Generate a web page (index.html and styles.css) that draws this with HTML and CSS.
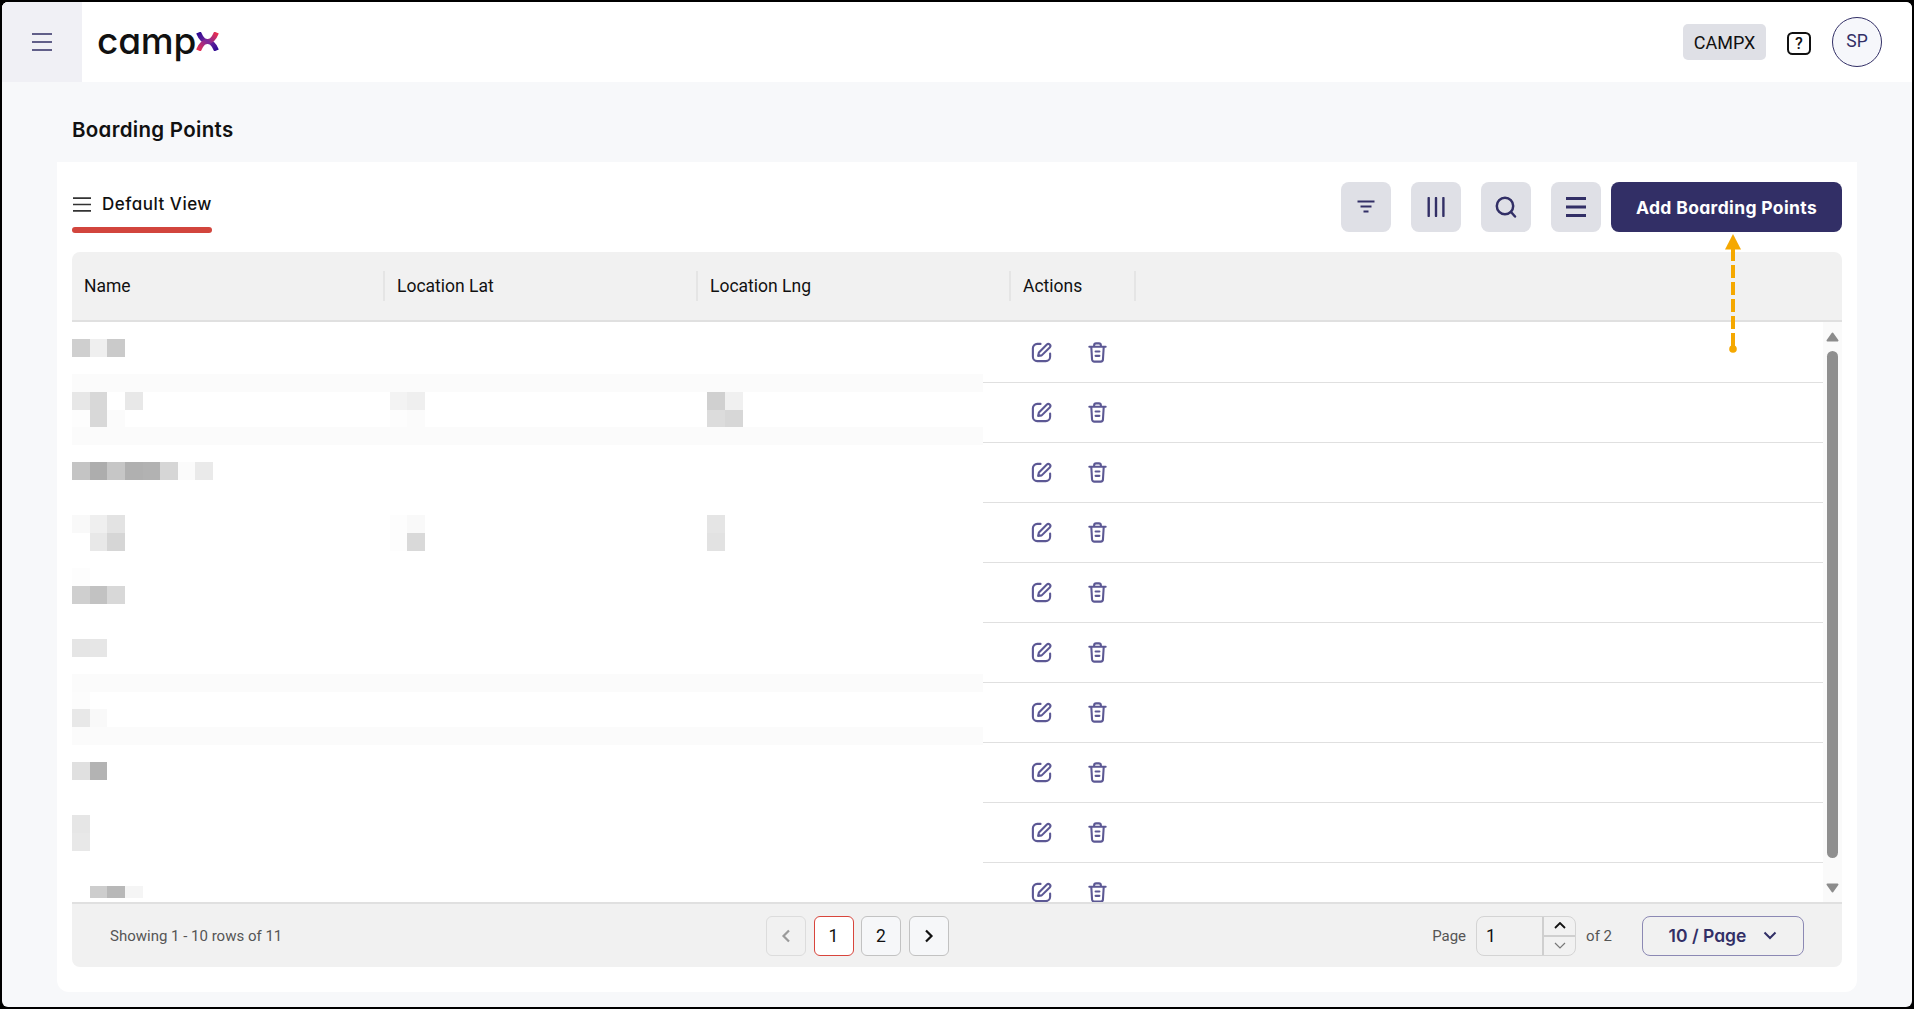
FILE: index.html
```html
<!DOCTYPE html>
<html lang="en">
<head>
<meta charset="utf-8">
<title>Boarding Points</title>
<link rel="stylesheet" href="styles.css">
</head>
<body>
<div class="app">
  <header class="topbar">
    <button class="menu-btn" aria-label="Menu">
      <svg width="20" height="18" viewBox="0 0 20 18"><path d="M0 1h20M0 9h20M0 17h20" stroke="#322f66" stroke-width="1.5"/></svg>
    </button>
    <div class="logo">
      <span class="logo-text">camp</span>
      <svg class="logo-x" width="23" height="19" viewBox="0 0 23 19">
        <defs>
          <linearGradient id="lgA" x1="0" y1="1" x2="1" y2="0"><stop offset="0" stop-color="#ee2f4d"/><stop offset=".5" stop-color="#7c2a9c"/><stop offset="1" stop-color="#ee2f4d"/></linearGradient>
          <linearGradient id="lgB" x1="0" y1="0" x2="1" y2="1"><stop offset="0" stop-color="#2c0a93"/><stop offset=".5" stop-color="#7c2a9c"/><stop offset="1" stop-color="#2c0a93"/></linearGradient>
        </defs>
        <path d="M2.5 .5C6 9 9 9.5 11.5 9.5S17 10 20.5 18.5" fill="none" stroke="url(#lgB)" stroke-width="5"/>
        <path d="M2.5 18.5C6 10 9 9.5 11.5 9.5S17 9 20.5 .5" fill="none" stroke="url(#lgA)" stroke-width="5"/>
      </svg>
    </div>
    <div class="top-right">
      <span class="chip">CAMPX</span>
      <svg class="help" width="24" height="23" viewBox="0 0 24 23"><rect x="1" y="1" width="22" height="21" rx="4.5" fill="none" stroke="#111" stroke-width="2"/><text x="12" y="17" text-anchor="middle" class="help-q">?</text></svg>
      <span class="avatar">SP</span>
    </div>
  </header>

  <main class="content">
    <h1 class="page-title">Boarding Points</h1>
    <section class="card">
      <div class="toolbar">
        <div class="tab">
          <div class="tab-label">
            <svg width="18" height="15" viewBox="0 0 18 15"><path d="M0 1.2h18M0 7.5h18M0 13.8h18" stroke="#333" stroke-width="1.7"/></svg>
            <span>Default View</span>
          </div>
          <div class="tab-line"></div>
        </div>
        <div class="tools">
          <button class="tool" aria-label="Filter"><svg width="18" height="14" viewBox="0 0 18 14"><path d="M.5 1.5h17M3.5 6.5h11M6.5 11.5h5" stroke="#322f66" stroke-width="2.2"/></svg></button>
          <button class="tool" aria-label="Columns"><svg width="18" height="20" viewBox="0 0 18 20"><path d="M1.7 1v18M9 1v18M16.4 1v18" stroke="#322f66" stroke-width="2.4" stroke-linecap="round"/></svg></button>
          <button class="tool" aria-label="Search"><svg width="22" height="22" viewBox="0 0 22 22"><circle cx="10" cy="10" r="8.2" fill="none" stroke="#322f66" stroke-width="2.5"/><path d="M16 16l4 4.5" stroke="#322f66" stroke-width="2.5" stroke-linecap="round"/></svg></button>
          <button class="tool" aria-label="Density"><svg width="20" height="20" viewBox="0 0 20 20"><path d="M0 1.5h20M0 10h20M0 18.5h20" stroke="#322f66" stroke-width="3"/></svg></button>
          <button class="add-btn">Add Boarding Points</button>
        </div>
      </div>

      <div class="table">
        <div class="thead">
          <div class="th">Name</div>
          <div class="th">Location Lat</div>
          <div class="th">Location Lng</div>
          <div class="th th-actions">Actions</div>
        </div>
        <div class="tbody">
          <div class="rows">
            <div class="row"><svg class="ic"><use href="#i-edit"/></svg><svg class="ic"><use href="#i-trash"/></svg></div>
            <div class="row"><svg class="ic"><use href="#i-edit"/></svg><svg class="ic"><use href="#i-trash"/></svg></div>
            <div class="row"><svg class="ic"><use href="#i-edit"/></svg><svg class="ic"><use href="#i-trash"/></svg></div>
            <div class="row"><svg class="ic"><use href="#i-edit"/></svg><svg class="ic"><use href="#i-trash"/></svg></div>
            <div class="row"><svg class="ic"><use href="#i-edit"/></svg><svg class="ic"><use href="#i-trash"/></svg></div>
            <div class="row"><svg class="ic"><use href="#i-edit"/></svg><svg class="ic"><use href="#i-trash"/></svg></div>
            <div class="row"><svg class="ic"><use href="#i-edit"/></svg><svg class="ic"><use href="#i-trash"/></svg></div>
            <div class="row"><svg class="ic"><use href="#i-edit"/></svg><svg class="ic"><use href="#i-trash"/></svg></div>
            <div class="row"><svg class="ic"><use href="#i-edit"/></svg><svg class="ic"><use href="#i-trash"/></svg></div>
            <div class="row"><svg class="ic"><use href="#i-edit"/></svg><svg class="ic"><use href="#i-trash"/></svg></div>
          </div>
          <div class="scrollbar">
            <svg class="sb-arrow" width="13" height="10" viewBox="0 0 13 10"><path d="M6.5 1.5L11.5 8.5H1.5Z" fill="#8c8c8c" stroke="#8c8c8c" stroke-width="2" stroke-linejoin="round"/></svg>
            <div class="sb-thumb"></div>
            <svg class="sb-arrow" width="13" height="10" viewBox="0 0 13 10"><path d="M6.5 8.5L11.5 1.5H1.5Z" fill="#8c8c8c" stroke="#8c8c8c" stroke-width="2" stroke-linejoin="round"/></svg>
          </div>
          <div class="mosaic" aria-hidden="true">
            <div class="m-row"><div class="m-col"><i class="g-cf"></i><i class="g-ef"></i><i class="g-ca"></i></div></div>
            <div class="m-row"></div>
            <div class="m-row band"></div>
            <div class="m-row"><div class="m-col"><i class="g-e7"></i><i class="g-d8"></i><i class="g-ff"></i><i class="g-e8"></i></div><div class="m-col"><i class="g-f3"></i><i class="g-ef"></i></div><div class="m-col"><i class="g-d0"></i><i class="g-f0"></i></div></div>
            <div class="m-row"><div class="m-col"><i class="g-fd"></i><i class="g-d8"></i><i class="g-fb"></i></div><div class="m-col"><i class="g-fd"></i><i class="g-fb"></i></div><div class="m-col"><i class="g-dc"></i><i class="g-d7"></i></div></div>
            <div class="m-row band"></div>
            <div class="m-row"></div>
            <div class="m-row"><div class="m-col"><i class="g-c4"></i><i class="g-ad"></i><i class="g-c6"></i><i class="g-b0"></i><i class="g-b2"></i><i class="g-d6"></i><i class="g-fb"></i><i class="g-ea"></i></div></div>
            <div class="m-row"></div>
            <div class="m-row"></div>
            <div class="m-row"><div class="m-col"><i class="g-f9"></i><i class="g-ef"></i><i class="g-e3"></i></div><div class="m-col"><i class="g-fd"></i><i class="g-f9"></i></div><div class="m-col"><i class="g-e5"></i></div></div>
            <div class="m-row"><div class="m-col"><i class="g-ff"></i><i class="g-e8"></i><i class="g-d6"></i></div><div class="m-col"><i class="g-fd"></i><i class="g-d9"></i></div><div class="m-col"><i class="g-e2"></i></div></div>
            <div class="m-row"></div>
            <div class="m-row"><div class="m-col"><i class="g-fd"></i></div></div>
            <div class="m-row"><div class="m-col"><i class="g-cf"></i><i class="g-c2"></i><i class="g-d8"></i></div></div>
            <div class="m-row"></div>
            <div class="m-row"></div>
            <div class="m-row"><div class="m-col"><i class="g-e5"></i><i class="g-e6"></i></div></div>
            <div class="m-row"></div>
            <div class="m-row band"></div>
            <div class="m-row"><div class="m-col"><i class="g-fc"></i></div></div>
            <div class="m-row"><div class="m-col"><i class="g-e8"></i><i class="g-f9"></i></div></div>
            <div class="m-row band"></div>
            <div class="m-row"></div>
            <div class="m-row"><div class="m-col"><i class="g-e0"></i><i class="g-b3"></i></div></div>
            <div class="m-row"></div>
            <div class="m-row"></div>
            <div class="m-row"><div class="m-col"><i class="g-e6"></i></div></div>
            <div class="m-row"><div class="m-col"><i class="g-e8"></i></div></div>
            <div class="m-row"></div>
            <div class="m-row"></div>
            <div class="m-row short"><div class="m-col"><i class="g-ff"></i><i class="g-cd"></i><i class="g-b8"></i><i class="g-f5"></i></div></div>
          </div>
        </div>
        <div class="tfoot">
          <div class="foot-left">Showing 1 - 10 rows of 11</div>
          <div class="pager">
            <button class="pg pg-disabled" aria-label="Previous"><svg width="10" height="14" viewBox="0 0 10 14"><path d="M8 1.5L2.5 7L8 12.5" fill="none" stroke="#9a9a9a" stroke-width="2.2"/></svg></button>
            <button class="pg pg-current">1</button>
            <button class="pg">2</button>
            <button class="pg" aria-label="Next"><svg width="10" height="14" viewBox="0 0 10 14"><path d="M2 1.5L7.5 7L2 12.5" fill="none" stroke="#111" stroke-width="2.2"/></svg></button>
          </div>
          <div class="foot-right">
            <span class="muted">Page</span>
            <div class="stepper">
              <span class="stepper-val">1</span>
              <div class="stepper-btns">
                <span class="step"><svg width="12" height="7" viewBox="0 0 12 7"><path d="M1 6l5-5 5 5" fill="none" stroke="#111" stroke-width="1.8"/></svg></span>
                <span class="step"><svg width="12" height="7" viewBox="0 0 12 7"><path d="M1 1l5 5 5-5" fill="none" stroke="#777" stroke-width="1.2"/></svg></span>
              </div>
            </div>
            <span class="muted">of 2</span>
            <button class="per-page"><span>10 / Page</span><svg width="14" height="9" viewBox="0 0 14 9"><path d="M1.5 1.5L7 7l5.500-5.500" fill="none" stroke="#322f66" stroke-width="2"/></svg></button>
          </div>
        </div>
      </div>
    </section>
  </main>

  <svg class="pointer" width="18" height="121" viewBox="0 0 18 121">
    <path d="M9 14V115" stroke="#f5a800" stroke-width="4" stroke-dasharray="13 4"/>
    <path d="M9 0L17 15.5H1Z" fill="#f5a800"/>
    <circle cx="9" cy="115" r="3.8" fill="#f5a800"/>
  </svg>
</div>

<svg class="defs" width="0" height="0">
  <symbol id="i-edit" viewBox="0 0 24 24">
    <path d="M11 3H7.5A4.5 4.5 0 0 0 3 7.5v9A4.5 4.5 0 0 0 7.5 21h9a4.5 4.5 0 0 0 4.5-4.5V13" fill="none" stroke="#5c5894" stroke-width="2.2" stroke-linecap="round"/>
    <path d="M8.5 15.5l.8-3.5 8.300-8.300a2.100 2.100 0 0 1 3 3L12.200 15z" fill="none" stroke="#5c5894" stroke-width="2.2" stroke-linejoin="round"/>
  </symbol>
  <symbol id="i-trash" viewBox="0 0 24 24">
    <path d="M3.500 6h17M8.500 6V4.500A2 2 0 0 1 10.500 2.500h3a2 2 0 0 1 2 2V6M5.500 6l.8 13a2.500 2.500 0 0 0 2.500 2.500h6.400a2.500 2.500 0 0 0 2.500-2.500l.8-13M10 11h4M10 15.500h4" fill="none" stroke="#5c5894" stroke-width="2.2" stroke-linecap="round" stroke-linejoin="round"/>
  </symbol>
</svg>
</body>
</html>
```

FILE: styles.css
```css
* { box-sizing: border-box; }
html, body { margin: 0; height: 100%; background: #000; overflow: hidden; }
body { padding: 2px; font-family: Roboto, "Liberation Sans", sans-serif; color: #111; }
button { font: inherit; color: inherit; cursor: pointer; padding: 0; }
.defs { display: block; height: 0; }

.app {
  position: relative;
  height: 1005px;
  background: #f7f8fa;
  border-radius: 6px;
  overflow: hidden;
  display: flex;
  flex-direction: column;
}

/* Top bar */
.topbar {
  height: 80px;
  flex: none;
  background: #fff;
  display: flex;
  align-items: center;
}
.menu-btn {
  width: 80px;
  height: 80px;
  border: 0;
  background: #f0f0f5;
  display: flex;
  align-items: center;
  justify-content: center;
}
.logo { margin-left: 15px; display: flex; align-items: center; }
.logo-text {
  font-family: Inter, sans-serif;
  font-feature-settings: "cv11" 1;
  font-size: 37px;
  font-weight: 500;
  letter-spacing: -0.2px;
  line-height: 40px;
  color: #111;
  position: relative;
  top: -1px;
}
.logo-x { margin-top: -1px; }
.top-right { margin-left: auto; margin-right: 30px; display: flex; align-items: center; }
.chip {
  width: 83px;
  height: 36px;
  background: #dfe0e6;
  border-radius: 5px;
  display: flex;
  align-items: center;
  justify-content: center;
  font-size: 18px;
  font-weight: 400;
}
.help { margin-left: 21px; margin-top: 2px; }
.help-q { font: 500 16px Roboto, sans-serif; fill: #111; }
.avatar {
  width: 50px;
  height: 50px;
  margin-left: 21px;
  border-radius: 50%;
  border: 1px solid #322f66;
  background: #f6f7fb;
  color: #322f66;
  font-size: 17.5px;
  display: flex;
  align-items: center;
  justify-content: center;
  padding-bottom: 2px;
}

/* Content */
.content { flex: 1; display: flex; flex-direction: column; }
.page-title {
  margin: 0;
  height: 80px;
  padding: 14px 0 0 70px;
  display: flex;
  align-items: center;
  font-family: Inter, sans-serif;
  font-feature-settings: "cv11" 1;
  font-size: 20.5px;
  font-weight: 600;
  color: #111;
  letter-spacing: 0.3px;
}
.card {
  width: 1800px;
  height: 830px;
  margin-left: 55px;
  background: #fff;
  border-radius: 0 0 12px 12px;
  padding: 20px 15px 25px;
  display: flex;
  flex-direction: column;
}
.toolbar { height: 50px; display: flex; justify-content: space-between; margin-bottom: 20px; flex: none; }
.tab { width: 140px; }
.tab-label {
  height: 44px;
  margin-bottom: 1px;
  display: flex;
  align-items: center;
  gap: 11px;
  padding-left: 1px;
  font-family: Inter, sans-serif;
  font-feature-settings: "cv11" 1;
  font-size: 17px;
  font-weight: 500;
  letter-spacing: 0.5px;
  color: #111;
  white-space: nowrap;
}
.tab-line { height: 6px; background: #d2453d; border-radius: 3px; }
.tools { display: flex; gap: 20px; }
.tool {
  width: 50px;
  height: 50px;
  border: 0;
  border-radius: 8px;
  background: #dfe0e6;
  display: flex;
  align-items: center;
  justify-content: center;
}
.add-btn {
  width: 231px;
  height: 50px;
  margin-left: -10px;
  border: 0;
  border-radius: 8px;
  background: #322f66;
  color: #fff;
  font-family: Inter, sans-serif;
  font-feature-settings: "cv11" 1;
  font-size: 17.5px;
  font-weight: 700;
  letter-spacing: 0.35px;
}

/* Table */
.table { flex: 1; display: flex; flex-direction: column; min-height: 0; }
.thead {
  height: 70px;
  flex: none;
  background: #f1f1f1;
  border-radius: 8px 8px 0 0;
  border-bottom: 2px solid #e0e0e0;
  display: grid;
  grid-template-columns: 313px 313px 313px 125px;
  align-items: center;
}
.th {
  height: 30px;
  padding-left: 12px;
  border-right: 2px solid #e5e5e5;
  display: flex;
  align-items: center;
  font-size: 17.5px;
  font-weight: 400;
  color: #111;
}
.tbody { position: relative; height: 580px; flex: none; display: flex; overflow: hidden; }
.rows { flex: 1; min-width: 0; padding-top: 1px; }
.row {
  height: 60px;
  border-bottom: 1.5px solid #e0e0e0;
  padding-left: 958px;
  display: flex;
  align-items: center;
  gap: 32.5px;
}
.ic { width: 23px; height: 23px; display: block; flex: none; }
.scrollbar {
  width: 19px;
  flex: none;
  background: #fafafa;
  display: flex;
  flex-direction: column;
  align-items: center;
  padding-top: 10px;
}
.sb-thumb { width: 11px; height: 507px; margin: 9px 0 25px; background: #8f8f8f; border-radius: 6px; }
.sb-arrow { display: block; flex: none; }

/* Redacted data, pixelated over the first three columns */
.mosaic {
  position: absolute;
  left: 0;
  top: 0;
  width: 911px;
  height: 580px;
  padding-top: 17px;
  background: #fff;
}
.m-row { height: 17.65px; display: grid; grid-template-columns: 317.7px 317.7px 1fr; }
.m-row.short { height: 12px; }
.m-row.band { background: #fbfbfb; }
.m-col { display: flex; height: 100%; }
.m-col i { display: block; width: 17.65px; height: 100%; }
.g-ff { background: #fff; } .g-fd { background: #fdfdfd; } .g-fc { background: #fcfcfc; } .g-fb { background: #fbfbfb; }
.g-f9 { background: #f9f9f9; } .g-f5 { background: #f5f5f5; } .g-f3 { background: #f3f3f3; } .g-f0 { background: #f0f0f0; }
.g-ef { background: #efefef; } .g-ea { background: #eaeaea; } .g-e8 { background: #e8e8e8; } .g-e7 { background: #e7e7e7; }
.g-e6 { background: #e6e6e6; } .g-e5 { background: #e5e5e5; } .g-e3 { background: #e3e3e3; } .g-e2 { background: #e2e2e2; }
.g-e0 { background: #e0e0e0; } .g-dc { background: #dcdcdc; } .g-d9 { background: #d9d9d9; } .g-d8 { background: #d8d8d8; }
.g-d7 { background: #d7d7d7; } .g-d6 { background: #d6d6d6; } .g-d0 { background: #d0d0d0; } .g-cf { background: #cfcfcf; }
.g-cd { background: #cdcdcd; } .g-ca { background: #cacaca; } .g-c6 { background: #c6c6c6; } .g-c4 { background: #c4c4c4; }
.g-c2 { background: #c2c2c2; } .g-b8 { background: #b8b8b8; } .g-b3 { background: #b3b3b3; } .g-b2 { background: #b2b2b2; }
.g-b0 { background: #b0b0b0; } .g-ad { background: #adadad; }

/* Footer */
.tfoot {
  height: 65px;
  flex: none;
  background: #f1f1f1;
  border-top: 2px solid #e0e0e0;
  border-radius: 0 0 8px 8px;
  display: flex;
  align-items: center;
  padding: 0 38px;
  position: relative;
}
.foot-left { width: 656px; font-size: 15px; color: #555; }
.pager { display: flex; gap: 7.5px; }
.pg {
  width: 40px;
  height: 40px;
  border: 1.5px solid #c2c2c2;
  border-radius: 6px;
  background: #f6f7f9;
  font-size: 17.5px;
  color: #111;
  display: flex;
  align-items: center;
  justify-content: center;
}
.pg-disabled { background: #f1f1f1; border-color: #dcdcdc; }
.pg-current { background: #fff; border-color: #d8453c; }
.foot-right { margin-left: auto; display: flex; align-items: center; }
.muted { font-size: 15px; color: #555; }
.stepper {
  width: 100px;
  height: 40px;
  margin: 0 10px;
  border: 1.5px solid #d4d4d4;
  border-radius: 8px;
  display: flex;
  align-items: stretch;
}
.stepper-val { flex: 1; padding-left: 9px; font-size: 17.5px; display: flex; align-items: center; }
.stepper-btns { width: 33px; border-left: 2px solid #cfcfcf; display: flex; flex-direction: column; }
.step { flex: 1; display: flex; align-items: center; justify-content: center; }
.step:first-child { border-bottom: 2px solid #cfcfcf; }
.per-page {
  width: 162px;
  height: 40px;
  margin-left: 30px;
  border: 1.5px solid #8c89b4;
  border-radius: 8px;
  background: transparent;
  display: flex;
  align-items: center;
  justify-content: center;
  gap: 17px;
  color: #322f66;
  font-family: Inter, sans-serif;
  font-feature-settings: "cv11" 1;
  font-size: 17.5px;
  font-weight: 600;
}

/* Tutorial annotation over the page */
.pointer { position: absolute; left: 1722px; top: 232px; }
```
